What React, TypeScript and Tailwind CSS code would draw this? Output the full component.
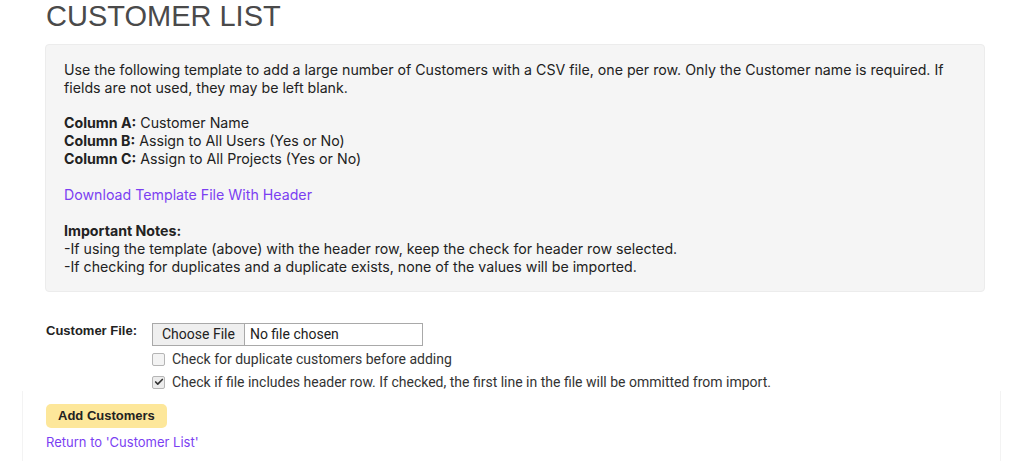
import { Check } from "lucide-react";

export default function App() {
    return (
        <div className="min-h-[461px] bg-white font-['Inter',sans-serif] text-[#222]">
            {/* Page title */}
            <h1 className="pl-[46px] pt-[1px] font-['Liberation_Sans',sans-serif] text-[29px] leading-[30px] text-[#4a4a4a]">
                CUSTOMER LIST
            </h1>

            {/* Instructions panel */}
            <div className="ml-[45px] mr-[39px] mt-[13px] rounded-[4px] border border-[#ececec] bg-[#f5f5f5] pb-[15px] pl-[18px] pr-[30px] pt-[16px] text-[14.2px] leading-[18px]">
                <p>
                    Use the following template to add a large number of Customers with a CSV file, one per row. Only the
                    Customer name is required. If fields are not used, they may be left blank.
                </p>

                <div className="mt-[17px]">
                    <p>
                        <b>Column A:</b> Customer Name
                    </p>
                    <p>
                        <b>Column B:</b> Assign to All Users (Yes or No)
                    </p>
                    <p>
                        <b>Column C:</b> Assign to All Projects (Yes or No)
                    </p>
                </div>

                <a href="#" className="mt-[18px] block text-[#7b3ff2]">
                    Download Template File With Header
                </a>

                <div className="mt-[18px]">
                    <p className="font-bold">Important Notes:</p>
                    <p>-If using the template (above) with the header row, keep the check for header row selected.</p>
                    <p>-If checking for duplicates and a duplicate exists, none of the values will be imported.</p>
                </div>
            </div>

            {/* Upload form */}
            <div className="mt-[31px] flex pl-[46px]">
                <span className="w-[106px] font-['Liberation_Sans',sans-serif] text-[13px] leading-[16px] font-bold">
                    Customer File:
                </span>
                <div className="flex flex-col font-['Roboto',sans-serif] text-[14px] text-[#333]">
                    <div className="flex h-[23px] w-[271px] items-center border border-[#a9a9a9] bg-white">
                        <span className="flex h-full items-center border-r border-[#a9a9a9] bg-[#efefef] px-[9px] text-[#222]">
                            Choose File
                        </span>
                        <span className="pl-[5px] text-[#222]">No file chosen</span>
                    </div>
                    <label className="mt-[4px] flex h-[18px] items-center gap-[7px]">
                        <span className="h-[13px] w-[13px] rounded-[2px] border border-[#b5b5b5] bg-[#f3f3f3]" />
                        Check for duplicate customers before adding
                    </label>
                    <label className="mt-[5px] flex h-[18px] items-center gap-[7px]">
                        <span className="flex h-[13px] w-[13px] items-center justify-center rounded-[2px] border border-[#b5b5b5] bg-[#ececec]">
                            <Check className="h-[10px] w-[10px] text-[#333]" strokeWidth={4} />
                        </span>
                        Check if file includes header row. If checked, the first line in the file will be ommitted from import.
                    </label>
                </div>
            </div>

            <div className="ml-[22px] mr-[23px] border-x border-[#f3f3f3] pb-[12px] pl-[23px] pt-[11px]">
                <button
                    type="button"
                    className="h-[24px] rounded-[5px] bg-[#fde79a] px-[12px] font-['Liberation_Sans',sans-serif] text-[13px] font-bold text-[#222]"
                >
                    Add Customers
                </button>
                <a href="#" className="mt-[6px] block text-[13px] leading-[16px] text-[#7b3ff2]">
                    Return to 'Customer List'
                </a>
            </div>
        </div>
    );
}
